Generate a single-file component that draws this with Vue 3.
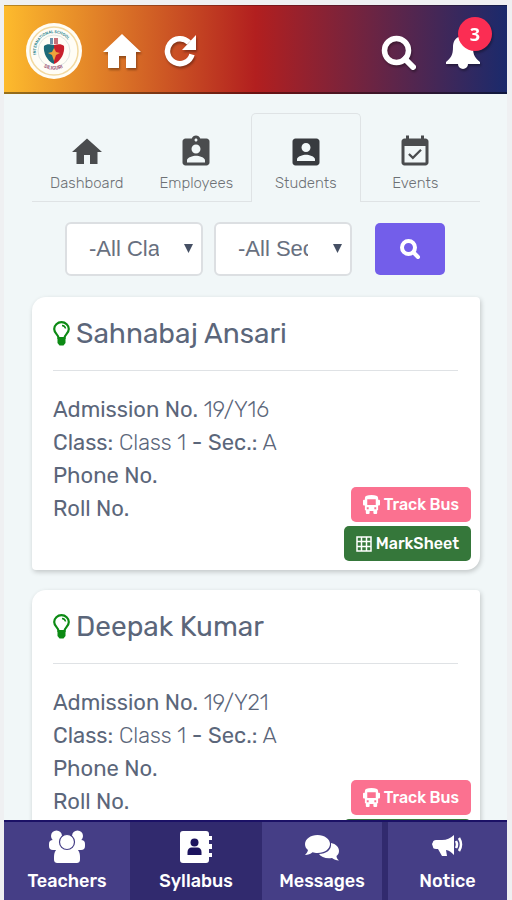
<template>
  <div class="app">
    <header class="topbar">
      <a href="#" class="logo" aria-label="School">
        <svg viewBox="0 0 56 56" width="56" height="56">
          <defs>
            <path id="ringTop" d="M11 34a18 18 0 1 1 34 0" />
            <path id="ringBottom" d="M13 40a20 20 0 0 0 30 0" />
          </defs>
          <circle cx="28" cy="28" r="28" fill="#fffdf6" />
          <circle cx="28" cy="28" r="24" fill="none" stroke="#f2d9a0" stroke-width="1.5" />
          <circle cx="28" cy="28" r="16" fill="none" stroke="#dfe5e0" stroke-width="1" />
          <text class="ring ring-top"><textPath href="#ringTop" startOffset="4%">INTERNATIONAL SCHOOL</textPath></text>
          <text class="ring ring-bottom"><textPath href="#ringBottom" startOffset="18%">SILIGURI</textPath></text>
          <path d="M28 22c-4-1-8-1-10 1-1 7 3 15 10 18z" fill="#1d6a78" />
          <path d="M28 22c4-1 8-1 10 1 1 7-3 15-10 18z" fill="#c8202c" />
          <path d="M28 25l2 4 4 1-4 2-2 6-2-6-4-2 4-1z" fill="#eda43b" />
          <path d="M24 15h3v6h-3z" fill="#6f93ad" />
          <path d="M28 15h4v6h-4z" fill="#c67078" />
        </svg>
      </a>
      <a href="#" class="top-link home" aria-label="Home">
        <svg viewBox="0 0 38 34" width="38" height="34" fill="#fff">
          <path d="M19 0L0 18h5v16h11V22h7v12h10V18h5z" />
        </svg>
      </a>
      <button type="button" class="top-link" aria-label="Refresh">
        <svg viewBox="0 0 34 34" width="34" height="34">
          <path d="M28 20.500A12.500 12.500 0 1 1 25 8.500" fill="none" stroke="#fff" stroke-width="5.500" />
          <path d="M32 1v15H18z" fill="#fff" />
        </svg>
      </button>
      <span class="spacer"></span>
      <button type="button" class="top-link search" aria-label="Search">
        <svg viewBox="0 0 36 36" width="36" height="36" fill="none" stroke="#fff">
          <circle cx="15.500" cy="15.500" r="12" stroke-width="5.500" />
          <path d="M24 24l8 8" stroke-width="6" stroke-linecap="round" />
        </svg>
      </button>
      <button type="button" class="top-link bell" aria-label="Notifications">
        <svg viewBox="0 0 36 36" width="36" height="36" fill="#fff">
          <path d="M18 0c-1.500 0-2.500 1-2.500 2.500C10 3.500 8 8 8 13c0 8-2 11-7 15v2h34v-2c-5-4-7-7-7-15 0-5-2-9.500-7.500-10.500C20.500 1 19.500 0 18 0zM13 30a5 5 0 0 0 10 0z" />
        </svg>
        <span class="badge">3</span>
      </button>
    </header>

    <main class="content">
      <nav class="tabs">
        <a v-for="tab in tabs" :key="tab.name" href="#" class="tab" :class="{ active: tab.name === 'Students' }">
          <svg viewBox="0 0 24 24" width="36" height="36" fill="currentColor">
            <path :d="tab.icon" />
          </svg>
          <span>{{ tab.name }}</span>
        </a>
      </nav>

      <form class="filters" @submit.prevent>
        <div v-for="item in filters" :key="item.label" class="select-box">
          <select :aria-label="item.label">
            <option>{{ item.text }}</option>
          </select>
          <svg class="arrow" viewBox="0 0 9 9" width="9" height="9">
            <path d="M0 0h9L4.500 9z" fill="#465064" />
          </svg>
        </div>
        <button type="submit" class="filter-btn" aria-label="Search students">
          <svg viewBox="0 0 22 22" width="22" height="22" fill="none" stroke="#fff">
            <circle cx="9.500" cy="9.500" r="6.500" stroke-width="4" />
            <path d="M14.500 14.500l4.500 4.500" stroke-width="4" stroke-linecap="round" />
          </svg>
        </button>
      </form>

      <article v-for="student in students" :key="student.admission" class="card">
        <h2 class="card-title">
          <svg viewBox="0 0 17 26" width="17" height="26">
            <path d="M5.500 17C5.500 13.500 1.200 12.500 1.200 8a7.300 6.800 0 0 1 14.600 0c0 4.500-4.300 5.500-4.300 9z" fill="none" stroke="#0c8a14" stroke-width="2.200" />
            <path d="M9 4.500a4 3.500 0 0 1 3.500 3" fill="none" stroke="#0c8a14" stroke-width="1.500" />
            <path d="M4.500 16.500h8V22l-2 2.500h-4l-2-2.500z" fill="#0c8a14" />
          </svg>
          {{ student.name }}
        </h2>
        <div class="card-body">
          <div class="details">
            <p><b>Admission No.</b> {{ student.admission }}</p>
            <p><b>Class:</b> {{ student.className }} <b>-</b> <b>Sec.:</b> {{ student.section }}</p>
            <p><b>Phone No.</b></p>
            <p><b>Roll No.</b></p>
          </div>
          <div class="actions">
            <button type="button" class="btn track">
              <svg viewBox="0 0 18 20" width="17" height="19" fill="#fff">
                <path fill-rule="evenodd" d="M9 0C4.500 0 2 1 2 3v2H1a1 1 0 0 0-1 1v4a1 1 0 0 0 1 1h1v5h1v3a1 1 0 0 0 1 1h2a1 1 0 0 0 1-1v-2h4v2a1 1 0 0 0 1 1h2a1 1 0 0 0 1-1v-3h1v-5h1a1 1 0 0 0 1-1V6a1 1 0 0 0-1-1h-1V3c0-2-2.500-3-7-3zM4.500 4.500h9v6h-9zM4 13h2v2H4zm8 0h2v2h-2z" />
              </svg>
              Track Bus
            </button>
            <button type="button" class="btn mark">
              <svg viewBox="0 0 16 16" width="16" height="16" fill="none" stroke="#fff" stroke-width="1.500">
                <path d="M1 1h14v14H1zM1 5.500h14M1 10.500h14M5.500 1v14M10.500 1v14" />
              </svg>
              MarkSheet
            </button>
          </div>
        </div>
      </article>
    </main>

    <nav class="bottom">
      <a href="#" class="bottom-item">
        <svg viewBox="0 0 36 34" width="36" height="34" fill="#fff" stroke="#453e86">
          <circle cx="7.500" cy="6" r="5.500" stroke="none" />
          <circle cx="28.500" cy="6" r="5.500" stroke="none" />
          <rect x="0" y="10" width="13" height="10" rx="4" stroke="none" />
          <rect x="23" y="10" width="13" height="10" rx="4" stroke="none" />
          <path d="M5 27c0-6 3-9 6-9h14c3 0 6 3 6 9v2c0 3-1 4-4 4H9c-3 0-4-1-4-4z" stroke="none" />
          <circle cx="18" cy="12" r="7.500" stroke-width="1.200" />
        </svg>
        Teachers
      </a>
      <a href="#" class="bottom-item active">
        <svg viewBox="0 0 32 34" width="32" height="34" fill="#fff">
          <path d="M3 1h23a3 3 0 0 1 3 3v26a3 3 0 0 1-3 3H3a3 3 0 0 1-3-3V4a3 3 0 0 1 3-3zM29 6h3v4h-3zM29 14h3v5h-3zM29 23h3v4h-3z" />
          <g fill="#1c135e">
            <circle cx="14.500" cy="12.500" r="4" />
            <path d="M7.500 25v-3c0-3 2-4.500 4-4.500h6c2 0 4 1.500 4 4.500v3z" />
          </g>
        </svg>
        Syllabus
      </a>
      <a href="#" class="bottom-item">
        <svg viewBox="0 0 34 34" width="34" height="34" fill="#fff">
          <path d="M26 13c5 1 8 4 8 8 0 2-1 4-2.500 5 0 2 1 3 2.500 4.500-3 0-5-1-7-2.500-6 1-11-1-13-4 7 0 13-4 12-11z" />
          <path d="M12.500 5C19.500 5 25 9 25 14s-5.500 9-12.500 9c-2 0-3.500-.3-5-.8C5.500 24 3 25 0 25c1.500-1.500 2.500-3 3-5-2-1.500-3-3.500-3-6 0-5 5.500-9 12.500-9z" />
        </svg>
        Messages
      </a>
      <a href="#" class="bottom-item">
        <svg viewBox="0 0 32 34" width="32" height="34" fill="#fff">
          <path d="M1 12c0-1 1-2 3-2h6c5 0 8-1.500 12-5v20c-3-3-5-4.500-8-5l1 6h-5l-4-7H4c-2 0-3-1-3-2l-1-3z" />
          <path d="M24 11q2 3.500 0 7M27 8q4 6.500 0 13" fill="none" stroke="#fff" stroke-width="2.500" />
        </svg>
        Notice
      </a>
    </nav>
  </div>
</template>

<script setup>
const tabs = [
  { name: 'Dashboard', icon: 'M10 20v-6h4v6h5v-8h3L12 3 2 12h3v8z' },
  {
    name: 'Employees',
    icon: 'M19 3h-4.180C14.400 1.840 13.300 1 12 1c-1.300 0-2.400.84-2.820 2H5c-1.100 0-2 .9-2 2v14c0 1.100.9 2 2 2h14c1.100 0 2-.9 2-2V5c0-1.100-.9-2-2-2zm-7 0c.55 0 1 .45 1 1s-.45 1-1 1-1-.45-1-1 .45-1 1-1zm0 4c1.660 0 3 1.340 3 3s-1.340 3-3 3-3-1.340-3-3 1.340-3 3-3zm6 12H6v-1.400c0-2 4-3.100 6-3.100s6 1.100 6 3.100V19z',
  },
  {
    name: 'Students',
    icon: 'M3 5v14c0 1.100.89 2 2 2h14c1.100 0 2-.9 2-2V5c0-1.100-.9-2-2-2H5c-1.110 0-2 .9-2 2zm12 4c0 1.660-1.340 3-3 3s-3-1.340-3-3 1.340-3 3-3 3 1.340 3 3zm-9 8c0-2 4-3.100 6-3.100s6 1.100 6 3.100v1H6v-1z',
  },
  {
    name: 'Events',
    icon: 'M16.530 11.060L15.470 10l-4.880 4.880-2.120-2.120-1.060 1.060L10.590 17l5.940-5.940zM19 3h-1V1h-2v2H8V1H6v2H5c-1.110 0-1.990.9-1.990 2L3 19c0 1.100.89 2 2 2h14c1.100 0 2-.9 2-2V5c0-1.100-.9-2-2-2zm0 16H5V8h14v11z',
  },
];

const filters = [
  { label: 'Class', text: '-All Class-' },
  { label: 'Section', text: '-All Section-' },
];

const students = [
  { name: 'Sahnabaj Ansari', admission: '19/Y16', className: 'Class 1', section: 'A' },
  { name: 'Deepak Kumar', admission: '19/Y21', className: 'Class 1', section: 'A' },
];
</script>

<style>
body {
  background: #eff0f2;
}
</style>

<style scoped>
.app {
  box-sizing: border-box;
  display: flex;
  flex-direction: column;
  height: 100vh;
  padding: 5px 5px 0 4px;
  font-family: Rubik, Roboto, sans-serif;
  color: #5b667a;
}
button {
  font-family: inherit;
  border: 0;
  padding: 0;
  cursor: pointer;
}
a {
  color: inherit;
  text-decoration: none;
}
svg {
  display: block;
  flex: none;
}

.topbar {
  box-sizing: border-box;
  flex: none;
  display: flex;
  align-items: center;
  height: 89px;
  padding: 2px 26px 0 22px;
  background: linear-gradient(90deg, #fdbb2d, #b21f1f 50%, #1a2a6c);
  box-shadow: inset 0 1px #0004, inset 0 -2px #0006;
}
.ring {
  font-family: Roboto, sans-serif;
  font-weight: 700;
}
.ring-top {
  font-size: 4px;
  fill: #2f8791;
}
.ring-bottom {
  font-size: 5px;
  fill: #a0587b;
}
.top-link {
  background: none;
  filter: drop-shadow(1px 2px 1px #0005);
}
.home {
  margin: 0 23px 0 21px;
}
.spacer {
  flex: 1;
}
.search {
  margin: 4px 28px 0 0;
}
.bell {
  position: relative;
  margin-top: 2px;
}
.badge {
  position: absolute;
  top: -17px;
  right: -11px;
  width: 34px;
  height: 34px;
  border-radius: 50%;
  background: #fb2d53;
  color: #fff;
  font: 700 18px/34px 'Open Sans', sans-serif;
}

.content {
  flex: 1;
  min-height: 0;
  overflow: hidden;
  padding: 19px 27px 0 28px;
  background: #f1f7f8;
}
.tabs {
  display: flex;
  padding-right: 10px;
  border-bottom: 1px solid #dfe3e5;
}
.tab {
  box-sizing: border-box;
  flex: 1;
  display: flex;
  flex-direction: column;
  align-items: center;
  height: 88px;
  padding-top: 20px;
  border: 1px solid transparent;
  border-bottom: 0;
  font-size: 15px;
  font-weight: 300;
  line-height: 26px;
  color: #4a4c4e;
}
.tab.active {
  margin-bottom: -1px;
  height: 89px;
  background: #f1f7f8;
  border-color: #dfe3e5;
  border-radius: 5px 5px 0 0;
  color: #383b3f;
}
.tab span {
  color: #6d7175;
}

.filters {
  display: flex;
  justify-content: center;
  align-items: center;
  gap: 11px;
  padding: 20px 2px 21px 0;
}
.select-box {
  position: relative;
  width: 138px;
}
.select-box select {
  box-sizing: border-box;
  display: block;
  width: 100%;
  height: 54px;
  padding: 0 42px 2px 22px;
  border: 2px solid #dcdfe2;
  border-radius: 6px;
  background: #fff;
  color: #687080;
  font: 22px 'Liberation Sans', sans-serif;
  appearance: none;
}
.arrow {
  position: absolute;
  top: 22px;
  right: 10px;
  pointer-events: none;
}
.filter-btn {
  display: grid;
  place-items: center;
  width: 70px;
  height: 52px;
  margin-left: 12px;
  border-radius: 5px;
  background: #735eea;
}

.card {
  margin-bottom: 20px;
  border-radius: 14px 4px 14px 4px;
  background: #fff;
  box-shadow: 1px 2px 5px #0003;
}
.card-title {
  display: flex;
  align-items: center;
  gap: 6px;
  margin: 0 22px 0 21px;
  height: 73px;
  border-bottom: 1px solid #dfe2e5;
  font-size: 28px;
  font-weight: 400;
}
.card-body {
  display: flex;
  justify-content: space-between;
  padding: 22px 9px 9px 21px;
}
.details {
  padding-bottom: 36px;
  font-size: 22px;
  font-weight: 300;
  line-height: 33px;
  white-space: nowrap;
}
.details p {
  margin: 0;
}
.details b {
  font-weight: 400;
}
.actions {
  align-self: flex-end;
  display: flex;
  flex-direction: column;
  align-items: flex-end;
  gap: 4px;
}
.btn {
  display: flex;
  align-items: center;
  gap: 4px;
  height: 35px;
  padding: 0 12px;
  border-radius: 5px;
  color: #fff;
  font-size: 16px;
  font-weight: 500;
}
.track {
  background: #fb7190;
}
.mark {
  background: #35773a;
}

.bottom {
  flex: none;
  display: grid;
  grid-template-columns: 126fr 120fr 120fr 119fr;
  gap: 6px;
  border-top: 2px solid #1b1166;
  background: #312a6e;
}
.bottom-item {
  display: flex;
  flex-direction: column;
  align-items: center;
  gap: 2px;
  height: 70px;
  padding-top: 8px;
  background: #453e86;
  color: #fff;
  font-size: 18px;
  font-weight: 500;
  line-height: 30px;
}
.bottom-item.active {
  background: none;
}
</style>
